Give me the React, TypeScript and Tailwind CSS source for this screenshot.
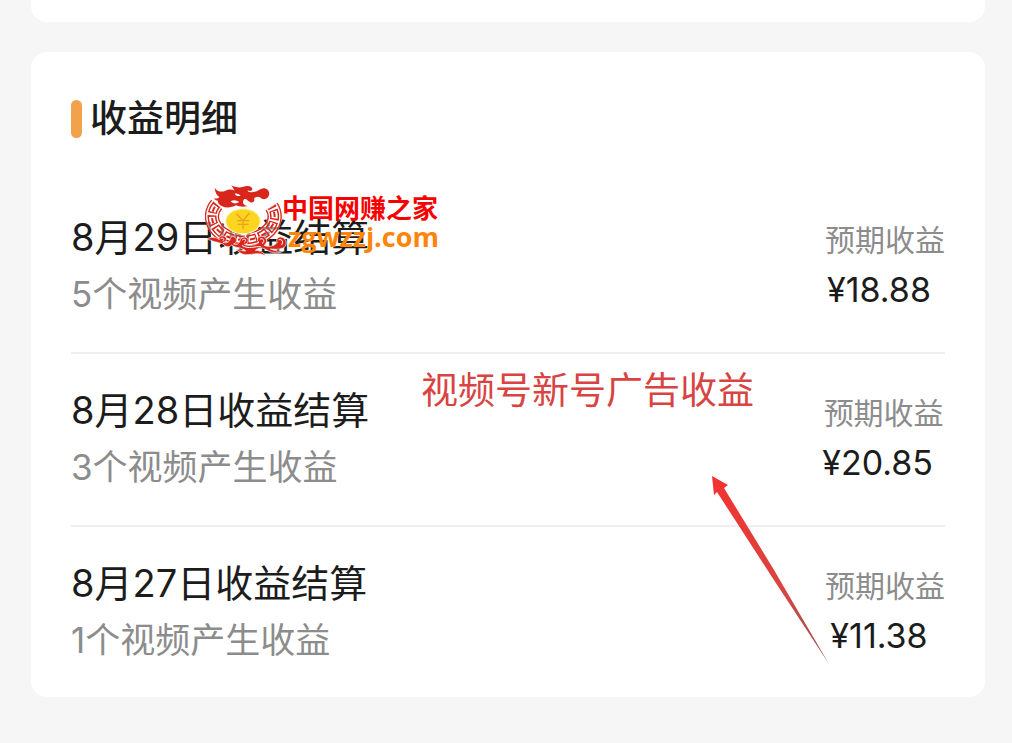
const records = [
  { date: "8月29日收益结算", videos: "5个视频产生收益", amount: "¥18.88" },
  { date: "8月28日收益结算", videos: "3个视频产生收益", amount: "¥20.85" },
  { date: "8月27日收益结算", videos: "1个视频产生收益", amount: "¥11.38" },
];

function DragonLogo() {
  return (
    <svg viewBox="30 30 255 216" className="w-[85px] h-[72px] shrink-0" aria-hidden="true">
      <defs>
        <mask id="meander" maskUnits="userSpaceOnUse" x="0" y="0" width="300" height="260">
          <g fill="none">
            <path d="M65 88A94 70 0 1 0 230 95" stroke="white" strokeWidth="43" />
            <path d="M65 88A94 70 0 1 0 230 95" stroke="black" strokeWidth="35" />
            <path d="M65 88A94 70 0 1 0 230 95" stroke="white" strokeWidth="27" strokeDasharray="30 6" />
            <path d="M65 88A94 70 0 1 0 230 95" stroke="black" strokeWidth="18" strokeDasharray="21 15" strokeDashoffset="-5" />
            <path d="M65 88A94 70 0 1 0 230 95" stroke="white" strokeWidth="6" strokeDasharray="16 20" strokeDashoffset="-9" />
          </g>
        </mask>
      </defs>
      <path d="M65 88A94 70 0 1 0 230 95" fill="none" stroke="white" strokeWidth="43" strokeOpacity="0.55" />
      <rect x="30" y="30" width="255" height="216" fill="#d9261c" mask="url(#meander)" />
      <ellipse cx="144" cy="139" rx="54" ry="39" fill="#fff6c0" />
      <ellipse cx="144" cy="139" rx="50" ry="36" fill="#fbd51f" />
      <path
        d="M124 116L144 137L163 114M144 137V162M127 137H162M128 148H161"
        fill="none"
        stroke="#f0a018"
        strokeWidth="4"
      />
      <g fill="#d9261c">
        <path
          fillRule="evenodd"
          d="M59 38C66 49 77 52 90 48C102 43 111 42 119 47C113 39 112 34 109 31C120 37 133 39 143 36C155 31 171 32 172 42C172 49 162 49 158 45C157 52 166 54 177 50C187 50 190 45 198 42C212 35 226 47 222 61C218 74 203 76 195 67C188 63 182 67 177 70C181 78 174 85 166 82C157 78 155 70 147 73C141 82 144 90 157 93C145 97 131 94 123 91C111 98 94 100 81 94C72 90 67 83 69 77C63 77 59 74 57 70C64 72 70 70 73 66C65 61 60 51 59 38ZM119 56C126 54 131 57 137 62C129 64 122 63 119 56ZM107 79C115 73 126 75 132 81C122 88 114 86 107 79Z"
        />
        <path
          d="M35 193C46 184 63 186 73 194C69 184 80 180 88 184C99 188 95 201 84 202C98 207 105 198 106 190C109 182 121 183 124 192C127 199 121 205 116 207C130 211 133 203 136 194C141 183 158 184 160 195C161 203 154 208 148 208C163 215 183 210 192 202C183 196 188 184 200 184C216 184 220 204 207 211C222 218 240 212 247 202C242 194 247 186 257 186C271 187 278 202 271 214C262 225 243 223 226 222C242 228 252 230 267 227C253 237 231 235 216 226C204 216 192 217 181 226C198 227 207 233 211 242C189 230 176 240 151 239C137 238 133 230 124 225C134 221 142 229 152 228C142 216 123 221 110 210C101 219 91 216 84 207C75 204 65 201 58 200C48 197 42 193 35 193Z"
          stroke="white"
          strokeWidth="2"
        />
      </g>
      <g fill="none" stroke="white" strokeWidth="3" strokeLinecap="round">
        <path d="M78 190C85 187 90 194 84 197" />
        <path d="M143 194C150 189 157 196 149 201" />
        <path d="M196 192C206 187 211 201 202 205" />
        <path d="M252 194C261 190 267 203 260 209" />
        <path d="M142 212C161 224 180 213 196 215" />
      </g>
    </svg>
  );
}

function Watermark() {
  return (
    <div className="absolute left-[174px] top-[133px] flex items-start pointer-events-none">
      <DragonLogo />
      <div className="-ml-2 whitespace-nowrap font-bold">
        <p className="mt-1 h-9 text-[26px] leading-10 text-[#f80000]">中国网赚之家</p>
        <p className="pl-1.5 text-[27px] leading-6 text-[#ff850a] font-['Open_Sans','Noto_Sans',sans-serif]">
          zgwzzj.com
        </p>
      </div>
    </div>
  );
}

function Annotation() {
  return (
    <>
      <p className="absolute left-[390px] top-[314px] whitespace-nowrap text-[37px] leading-[50px] text-[#d84442] pointer-events-none">
        视频号新号广告收益
      </p>
      <svg
        viewBox="0 0 118 189"
        className="absolute left-[681px] top-[424px] w-[118px] h-[189px] pointer-events-none"
        aria-hidden="true"
      >
        <defs>
          <linearGradient id="arrow" x1="0" y1="0" x2="1" y2="1">
            <stop offset="0" stopColor="#f43230" />
            <stop offset="0.6" stopColor="#d84541" />
            <stop offset="1" stopColor="#8f5552" />
          </linearGradient>
        </defs>
        <path d="M0 0L16 9L12 12L62 94L117 188L58 98L5 16L2 19Z" fill="url(#arrow)" />
      </svg>
    </>
  );
}

export default function App() {
  return (
    <div className="min-h-screen bg-[#f6f6f6] pl-[31px] pr-[27px] pb-11 text-[#1c1c1c] font-['Inter','Noto_Sans_CJK_SC',sans-serif]">
      <div className="h-[22px] rounded-b-2xl bg-white" />

      <main className="relative mt-[30px] rounded-2xl bg-white px-10 pt-12">
        <header className="flex items-center gap-2">
          <span className="h-[38px] w-[11px] rounded-full bg-[#f2a24b]" />
          <h1 className="text-[37px] leading-[38px] font-medium">收益明细</h1>
        </header>

        <ul className="mt-[43px] divide-y-2 divide-[#efefef]">
          {records.map((record) => (
            <li key={record.date} className="flex justify-between pt-7 pb-[29px] last:pb-7">
              <div className="leading-[57px] whitespace-nowrap">
                <h2 className="text-[38px]">{record.date}</h2>
                <p className="text-[35px] text-[#8c8c8c]">{record.videos}</p>
              </div>
              <div className="flex flex-col items-center pt-1.5 leading-[50px] whitespace-nowrap">
                <p className="text-[30px] text-[#8c8c8c]">预期收益</p>
                <p className="pr-3 text-[34px]">{record.amount}</p>
              </div>
            </li>
          ))}
        </ul>

        <Annotation />
        <Watermark />
      </main>
    </div>
  );
}
